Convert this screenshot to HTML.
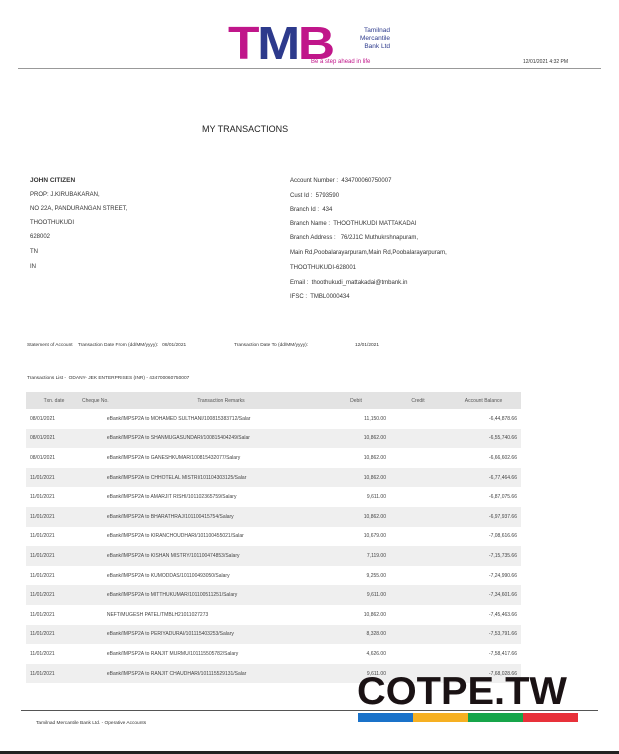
<!DOCTYPE html>
<html><head><style>
*{margin:0;padding:0;box-sizing:border-box}
body{width:619px;height:754px;background:#fff;position:relative;overflow:hidden;font-family:"Liberation Sans",sans-serif;color:#333}
.a{position:absolute;white-space:nowrap;font-size:6px;line-height:8px}
.s{font-size:6.5px}
table{position:absolute;left:26px;top:392px;width:495px;border-collapse:collapse;font-size:5px;color:#444}
td{height:19.6px;padding:0 4px;white-space:nowrap}
tr:nth-child(odd) td{background:#efefef}
th{height:17px;background:#e3e3e3;font-weight:normal;color:#555}
</style></head><body>
<div class="a" style="left:228px;top:22px;font:bold 46px/42px 'Liberation Sans',sans-serif;color:#c0168a;letter-spacing:-2px;transform:scaleX(1.12);transform-origin:left">T<span style="color:#2d3a8c">M</span>B</div>
<div class="a" style="left:350px;top:27px;font-size:6.5px;line-height:8px;color:#2d3a8c;text-align:right;width:40px">Tamilnad<br>Mercantile<br>Bank Ltd</div>
<div class="a" style="left:311px;top:58px;font-size:6px;color:#c0168a">Be a step ahead in life</div>
<div class="a" style="left:523px;top:58px;font-size:5px">12/01/2021 4:32 PM</div>
<div style="position:absolute;left:18px;top:68px;width:583px;height:1px;background:#999"></div>
<div class="a" style="left:202px;top:124px;font-size:9px;line-height:10px;color:#222">MY TRANSACTIONS</div>
<div class="a s" style="left:30px;top:177px;font-weight:bold">JOHN CITIZEN</div>
<div class="a" style="left:30px;top:191px">PROP: J.KIRUBAKARAN,</div>
<div class="a" style="left:30px;top:205px">NO 22A, PANDURANGAN STREET,</div>
<div class="a" style="left:30px;top:219px">THOOTHUKUDI</div>
<div class="a" style="left:30px;top:233px">628002</div>
<div class="a" style="left:30px;top:248px">TN</div>
<div class="a" style="left:30px;top:263px">IN</div>
<div class="a" style="left:290px;top:177px">Account Number :&nbsp; 434700060750007</div>
<div class="a" style="left:290px;top:192px">Cust Id :&nbsp; 5793590</div>
<div class="a" style="left:290px;top:206px">Branch Id :&nbsp; 434</div>
<div class="a" style="left:290px;top:220px">Branch Name :&nbsp; THOOTHUKUDI MATTAKADAI</div>
<div class="a" style="left:290px;top:234px">Branch Address :&nbsp;&nbsp; 76/2J1C Muthukrshnapuram,</div>
<div class="a" style="left:290px;top:249px">Main Rd,Poobalarayarpuram,Main Rd,Poobalarayarpuram,</div>
<div class="a" style="left:290px;top:264px">THOOTHUKUDI-628001</div>
<div class="a" style="left:290px;top:279px">Email :&nbsp; thoothukudi_mattakadai@tmbank.in</div>
<div class="a" style="left:290px;top:293px">IFSC :&nbsp; TMBL0000434</div>
<div class="a" style="left:27px;top:342px;font-size:4.8px">Statement of Account&nbsp;&nbsp;&nbsp; Transaction Date From (dd/MM/yyyy):&nbsp;&nbsp; 08/01/2021</div>
<div class="a" style="left:234px;top:342px;font-size:4.8px">Transaction Date To (dd/MM/yyyy):</div>
<div class="a" style="left:355px;top:342px;font-size:4.8px">12/01/2021</div>
<div class="a" style="left:27px;top:375px;font-size:4.8px">Transactions List -&nbsp; ODANY- JEK ENTERPRISES (INR) - 434700060750007</div>
<table>
<tr><th style="width:56px">Txn. date</th><th style="width:38px;text-align:left">Cheque No.</th><th style="width:202px">Transaction Remarks</th><th style="width:68px">Debit</th><th style="width:56px">Credit</th><th>Account Balance</th></tr>
<tr><td>08/01/2021</td><td colspan="2">&nbsp;&nbsp;&nbsp;&nbsp;&nbsp;&nbsp;&nbsp;&nbsp;&nbsp;&nbsp;&nbsp;&nbsp;&nbsp;&nbsp;&nbsp;eBank/IMPSP2A to MOHAMED SULTHANI/100815383712/Salar</td><td style="text-align:right">11,150.00</td><td></td><td style="text-align:right">-6,44,878.66</td></tr>
<tr><td>08/01/2021</td><td colspan="2">&nbsp;&nbsp;&nbsp;&nbsp;&nbsp;&nbsp;&nbsp;&nbsp;&nbsp;&nbsp;&nbsp;&nbsp;&nbsp;&nbsp;&nbsp;eBank/IMPSP2A to SHANMUGASUNDARI/100815404249/Salar</td><td style="text-align:right">10,862.00</td><td></td><td style="text-align:right">-6,55,740.66</td></tr>
<tr><td>08/01/2021</td><td colspan="2">&nbsp;&nbsp;&nbsp;&nbsp;&nbsp;&nbsp;&nbsp;&nbsp;&nbsp;&nbsp;&nbsp;&nbsp;&nbsp;&nbsp;&nbsp;eBank/IMPSP2A to GANESHKUMAR/100815432077/Salary</td><td style="text-align:right">10,862.00</td><td></td><td style="text-align:right">-6,66,602.66</td></tr>
<tr><td>11/01/2021</td><td colspan="2">&nbsp;&nbsp;&nbsp;&nbsp;&nbsp;&nbsp;&nbsp;&nbsp;&nbsp;&nbsp;&nbsp;&nbsp;&nbsp;&nbsp;&nbsp;eBank/IMPSP2A to CHHOTELAL MISTRI/101104303125/Salar</td><td style="text-align:right">10,862.00</td><td></td><td style="text-align:right">-6,77,464.66</td></tr>
<tr><td>11/01/2021</td><td colspan="2">&nbsp;&nbsp;&nbsp;&nbsp;&nbsp;&nbsp;&nbsp;&nbsp;&nbsp;&nbsp;&nbsp;&nbsp;&nbsp;&nbsp;&nbsp;eBank/IMPSP2A to AMARJIT RISHI/101102365759/Salary</td><td style="text-align:right">9,611.00</td><td></td><td style="text-align:right">-6,87,075.66</td></tr>
<tr><td>11/01/2021</td><td colspan="2">&nbsp;&nbsp;&nbsp;&nbsp;&nbsp;&nbsp;&nbsp;&nbsp;&nbsp;&nbsp;&nbsp;&nbsp;&nbsp;&nbsp;&nbsp;eBank/IMPSP2A to BHARATHRAJ/101100415754/Salary</td><td style="text-align:right">10,862.00</td><td></td><td style="text-align:right">-6,97,937.66</td></tr>
<tr><td>11/01/2021</td><td colspan="2">&nbsp;&nbsp;&nbsp;&nbsp;&nbsp;&nbsp;&nbsp;&nbsp;&nbsp;&nbsp;&nbsp;&nbsp;&nbsp;&nbsp;&nbsp;eBank/IMPSP2A to KIRANCHOUDHARI/101100455021/Salar</td><td style="text-align:right">10,679.00</td><td></td><td style="text-align:right">-7,08,616.66</td></tr>
<tr><td>11/01/2021</td><td colspan="2">&nbsp;&nbsp;&nbsp;&nbsp;&nbsp;&nbsp;&nbsp;&nbsp;&nbsp;&nbsp;&nbsp;&nbsp;&nbsp;&nbsp;&nbsp;eBank/IMPSP2A to KISHAN MISTRY/101100474853/Salary</td><td style="text-align:right">7,119.00</td><td></td><td style="text-align:right">-7,15,735.66</td></tr>
<tr><td>11/01/2021</td><td colspan="2">&nbsp;&nbsp;&nbsp;&nbsp;&nbsp;&nbsp;&nbsp;&nbsp;&nbsp;&nbsp;&nbsp;&nbsp;&nbsp;&nbsp;&nbsp;eBank/IMPSP2A to KUMODDAS/101100493050/Salary</td><td style="text-align:right">9,255.00</td><td></td><td style="text-align:right">-7,24,990.66</td></tr>
<tr><td>11/01/2021</td><td colspan="2">&nbsp;&nbsp;&nbsp;&nbsp;&nbsp;&nbsp;&nbsp;&nbsp;&nbsp;&nbsp;&nbsp;&nbsp;&nbsp;&nbsp;&nbsp;eBank/IMPSP2A to MITTHUKUMAR/101100511251/Salary</td><td style="text-align:right">9,611.00</td><td></td><td style="text-align:right">-7,34,601.66</td></tr>
<tr><td>11/01/2021</td><td colspan="2">&nbsp;&nbsp;&nbsp;&nbsp;&nbsp;&nbsp;&nbsp;&nbsp;&nbsp;&nbsp;&nbsp;&nbsp;&nbsp;&nbsp;&nbsp;NEFT/MUGESH PATEL/TMBLH21011027273</td><td style="text-align:right">10,862.00</td><td></td><td style="text-align:right">-7,45,463.66</td></tr>
<tr><td>11/01/2021</td><td colspan="2">&nbsp;&nbsp;&nbsp;&nbsp;&nbsp;&nbsp;&nbsp;&nbsp;&nbsp;&nbsp;&nbsp;&nbsp;&nbsp;&nbsp;&nbsp;eBank/IMPSP2A to PERIYADURAI/101115403253/Salary</td><td style="text-align:right">8,328.00</td><td></td><td style="text-align:right">-7,53,791.66</td></tr>
<tr><td>11/01/2021</td><td colspan="2">&nbsp;&nbsp;&nbsp;&nbsp;&nbsp;&nbsp;&nbsp;&nbsp;&nbsp;&nbsp;&nbsp;&nbsp;&nbsp;&nbsp;&nbsp;eBank/IMPSP2A to RANJIT MURMU/101115505782/Salary</td><td style="text-align:right">4,626.00</td><td></td><td style="text-align:right">-7,58,417.66</td></tr>
<tr><td>11/01/2021</td><td colspan="2">&nbsp;&nbsp;&nbsp;&nbsp;&nbsp;&nbsp;&nbsp;&nbsp;&nbsp;&nbsp;&nbsp;&nbsp;&nbsp;&nbsp;&nbsp;eBank/IMPSP2A to RANJIT CHAUDHARI/101115529131/Salar</td><td style="text-align:right">9,611.00</td><td></td><td style="text-align:right">-7,68,028.66</td></tr>
</table>
<div class="a" style="left:357px;top:673px;font:bold 39px/38px 'Liberation Sans',sans-serif;color:#1a1214;transform:scaleX(1.02);transform-origin:left">COTPE.TW</div>
<div style="position:absolute;left:21px;top:710px;width:577px;height:1px;background:#555"></div>
<div style="position:absolute;left:358px;top:713px;width:55px;height:9px;background:#1a72c9"></div>
<div style="position:absolute;left:413px;top:713px;width:55px;height:9px;background:#f6b022"></div>
<div style="position:absolute;left:468px;top:713px;width:55px;height:9px;background:#16a54a"></div>
<div style="position:absolute;left:523px;top:713px;width:55px;height:9px;background:#e8313a"></div>
<div class="a" style="left:36px;top:720px;font-size:4.8px">Tamilnad Mercantile Bank Ltd. - Operative Accounts</div>
<div style="position:absolute;left:0;top:751px;width:619px;height:3px;background:#222"></div>
</body></html>
